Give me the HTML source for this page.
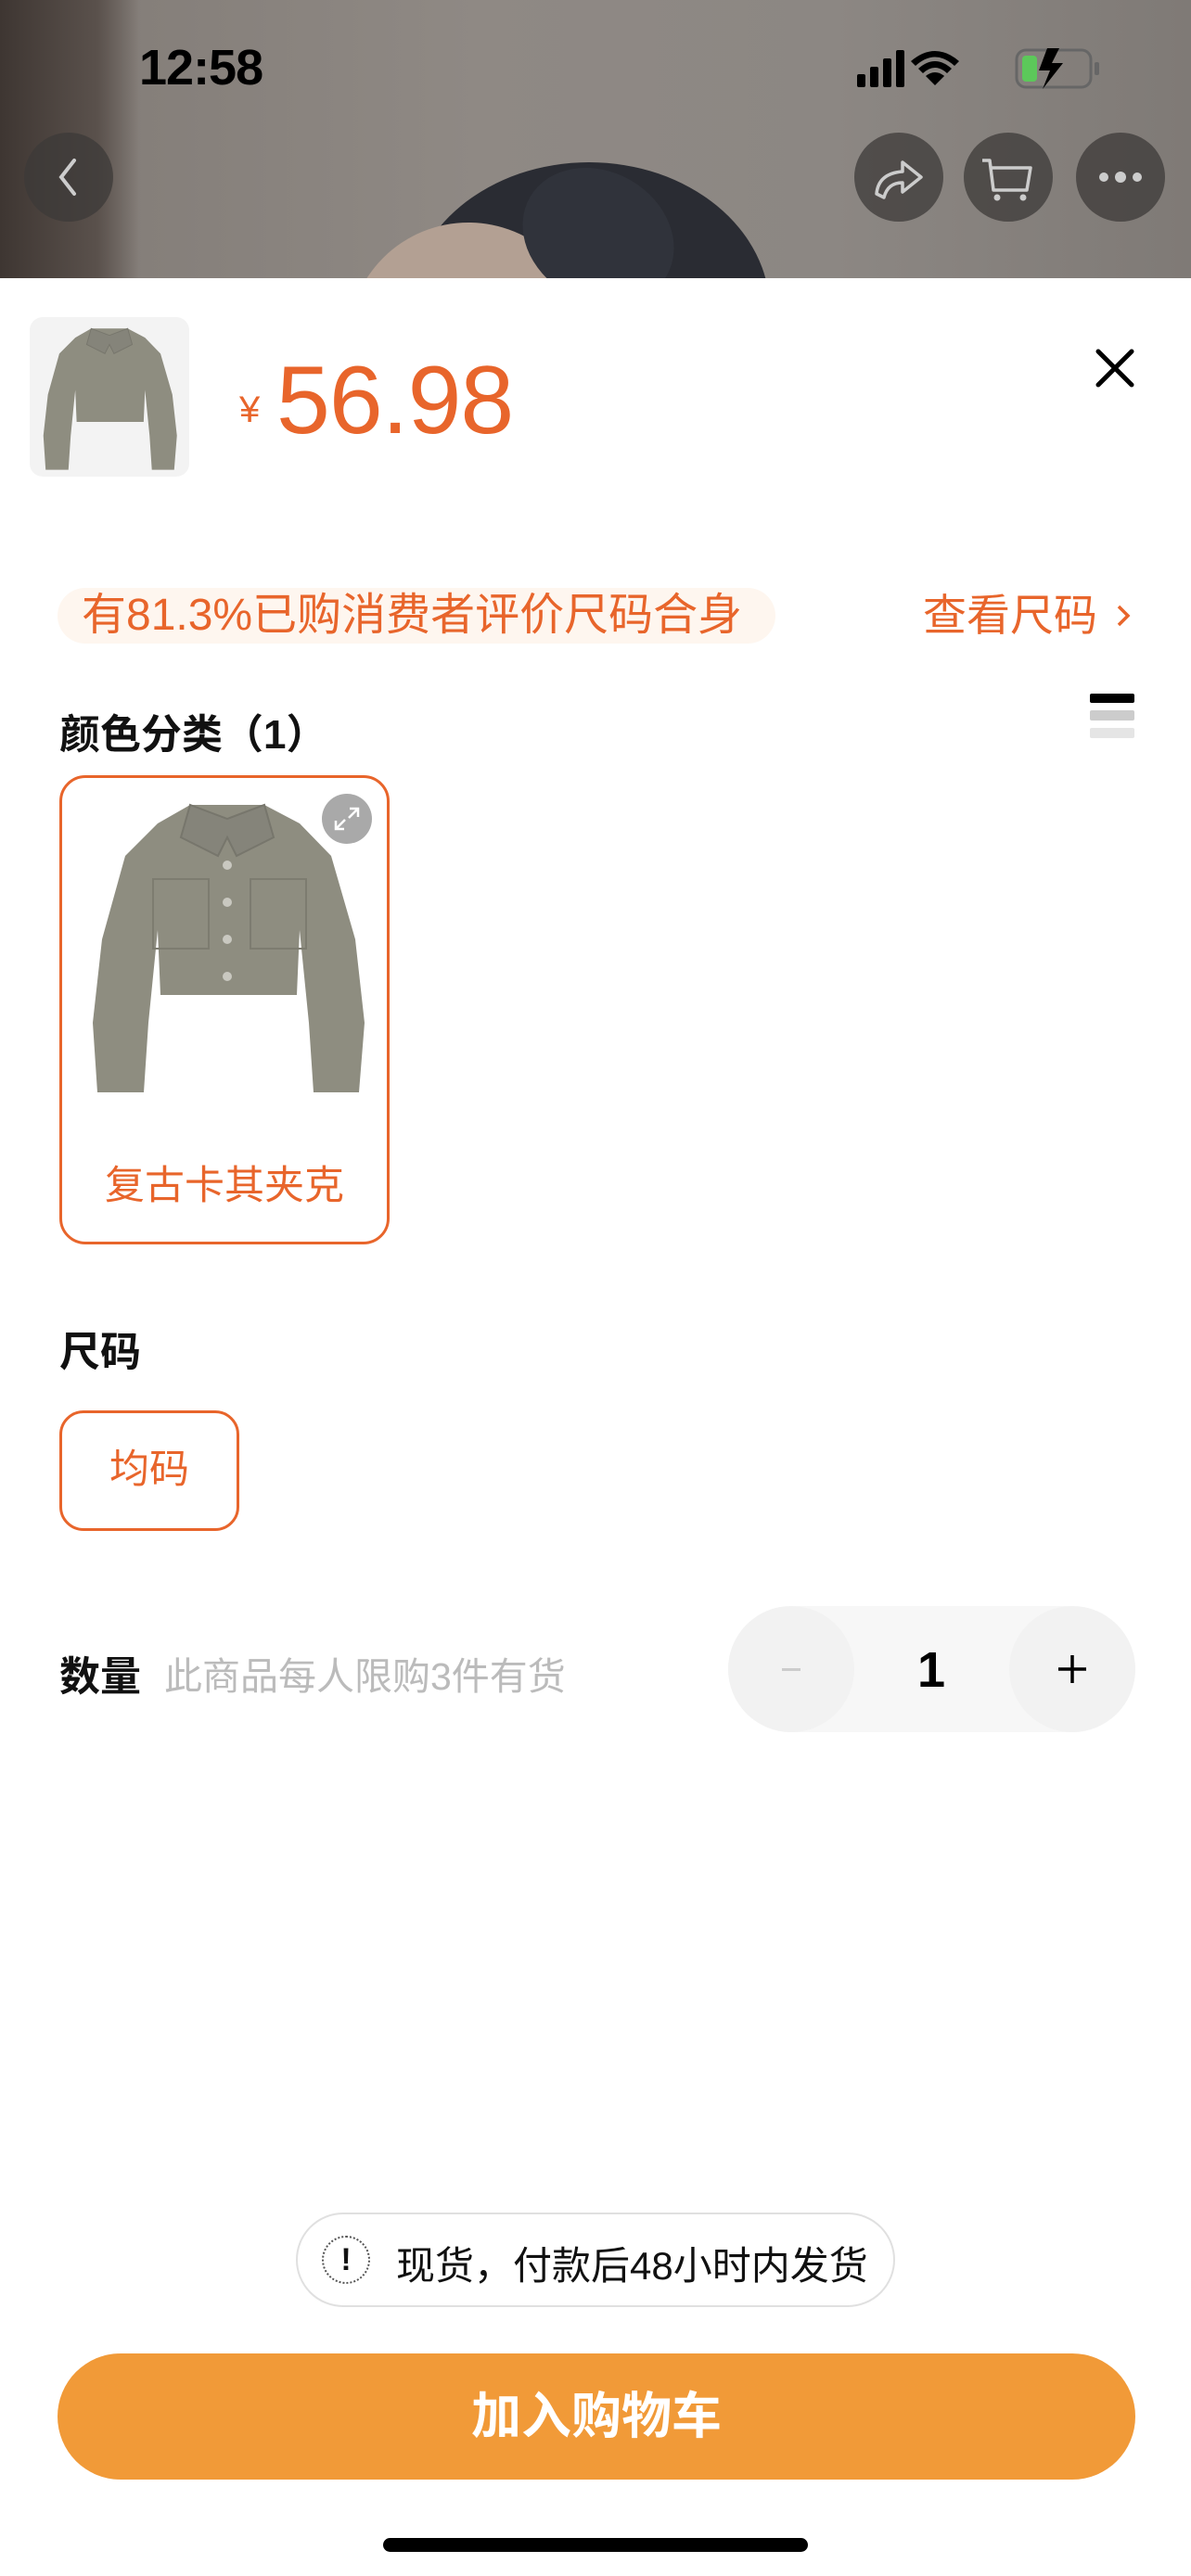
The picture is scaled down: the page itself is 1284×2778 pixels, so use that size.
<!DOCTYPE html>
<html><head><meta charset="utf-8"><style>
*{margin:0;padding:0;box-sizing:border-box}
body{width:1284px;height:2778px;position:relative;background:#fff;font-family:"Liberation Sans","Noto Sans CJK SC",sans-serif;overflow:hidden}
.a{position:absolute}
.or{color:#e8652b}
.circ{position:absolute;width:96px;height:96px;border-radius:50%;background:rgba(60,58,56,.75)}
</style></head><body>
<!-- header photo -->
<div class="a" style="left:0;top:0;width:1284px;height:300px;background:linear-gradient(90deg,#6f6762 0,#857f7a 12%,#8f8984 40%,#8c8783 70%,#7f7a76 100%);overflow:hidden">
  <div class="a" style="left:0;top:0;width:150px;height:300px;background:linear-gradient(90deg,#3e3632,#5a514c 70%,transparent)"></div>
  <div class="a" style="left:440px;top:175px;width:390px;height:320px;border-radius:50% 50% 20% 20%;background:#2a2c33"></div>
  <div class="a" style="left:375px;top:240px;width:260px;height:260px;border-radius:50%;background:#b3a093"></div>
  <div class="a" style="left:560px;top:185px;width:170px;height:140px;border-radius:50%;background:#30333b;transform:rotate(30deg)"></div>
</div>
<div class="a" style="left:150px;top:42px;font-size:54px;font-weight:bold;color:#000;letter-spacing:-1px">12:58</div>
<svg class="a" style="left:924px;top:50px" width="270" height="48" viewBox="0 0 270 48">
  <rect x="0" y="30" width="9" height="14" rx="2"/><rect x="14" y="22" width="9" height="22" rx="2"/><rect x="28" y="13" width="9" height="31" rx="2"/><rect x="42" y="4" width="9" height="40" rx="2"/>
  <path d="M84 42 L74 32 Q84 24 94 32 Z"/><path d="M66 24 Q84 8 102 24 L97 29 Q84 17 71 29 Z"/><path d="M58 16 Q84 -6 110 16 L105 21 Q84 2 63 21 Z"/>
  <rect x="172" y="4" width="80" height="40" rx="10" fill="none" stroke="#666" stroke-width="3"/><rect x="178" y="10" width="16" height="28" rx="4" fill="#5cc85a"/>
  <rect x="256" y="17" width="5" height="14" rx="2" fill="#666"/><path d="M205 2 L196 26 H208 L200 46 L222 18 H210 L218 2 Z"/>
</svg>
<div class="circ" style="left:26px;top:143px"></div>
<svg class="a" style="left:26px;top:143px" width="96" height="96"><path d="M54 30 L40 48 L54 66" fill="none" stroke="#ccc" stroke-width="4" stroke-linecap="round"/></svg>
<div class="circ" style="left:921px;top:143px"></div>
<svg class="a" style="left:921px;top:143px" width="96" height="96"><path d="M24 66 Q26 44 52 42 L52 32 L72 48 L52 64 L52 54 Q36 54 32 70 Z" fill="none" stroke="#ccc" stroke-width="3.5" stroke-linejoin="round"/></svg>
<div class="circ" style="left:1039px;top:143px"></div>
<svg class="a" style="left:1039px;top:143px" width="96" height="96"><path d="M20 30 H28 L32 62 H68 L72 38 H30" fill="none" stroke="#ccc" stroke-width="3.5" stroke-linejoin="round"/><circle cx="36" cy="70" r="3.5" fill="#ccc"/><circle cx="64" cy="70" r="3.5" fill="#ccc"/></svg>
<div class="circ" style="left:1160px;top:143px"></div>
<svg class="a" style="left:1160px;top:143px" width="96" height="96"><circle cx="30" cy="48" r="5" fill="#ccc"/><circle cx="48" cy="48" r="6" fill="#ccc"/><circle cx="66" cy="48" r="5" fill="#ccc"/></svg>

<!-- thumbnail -->
<div class="a" style="left:32px;top:342px;width:172px;height:172px;border-radius:14px;background:#f3f3f3;overflow:hidden">
<svg width="172" height="172" viewBox="-20 -10 340 350"><g fill="#8e8d80"><path d="M110,15 L75,35 L40,70 L15,160 L5,250 L10,325 L60,325 L65,250 L75,150 L78,220 L225,220 L228,150 L238,250 L243,325 L292,325 L298,250 L288,160 L262,70 L228,35 L190,15 Z"/></g><path d="M110,15 L150,30 L190,15 L200,50 L160,70 L150,50 L140,70 L100,50 Z" fill="#85847a" stroke="#77766c" stroke-width="2"/></svg>
</div>
<div class="a or" style="left:258px;top:420px;font-size:40px">¥</div>
<div class="a or" style="left:298px;top:373px;font-size:104px;letter-spacing:-1px">56.98</div>
<svg class="a" style="left:1180px;top:375px" width="44" height="44"><path d="M4 4 L40 40 M40 4 L4 40" stroke="#000" stroke-width="5" stroke-linecap="round"/></svg>

<!-- fit banner -->
<div class="a" style="left:62px;top:634px;width:774px;height:60px;border-radius:30px;background:#fef6ef"></div>
<div class="a or" style="left:88px;top:634px;font-size:48px;line-height:60px;white-space:nowrap">有81.3%已购消费者评价尺码合身</div>
<div class="a or" style="left:995px;top:634px;font-size:47px;line-height:60px;white-space:nowrap">查看尺码</div>
<svg class="a" style="left:1198px;top:648px" width="26" height="32"><path d="M8 6 L18 16 L8 26" fill="none" stroke="#e8652b" stroke-width="3.5"/></svg>

<div class="a" style="left:64px;top:756px;font-size:44px;font-weight:bold;color:#111;white-space:nowrap">颜色分类（1）</div>
<div class="a" style="left:1175px;top:748px;width:48px;height:10px;border-radius:2px;background:#000"></div>
<div class="a" style="left:1175px;top:766px;width:48px;height:11px;border-radius:2px;background:#ccc"></div>
<div class="a" style="left:1175px;top:785px;width:48px;height:11px;border-radius:2px;background:#e5e5e5"></div>

<!-- color card -->
<div class="a" style="left:64px;top:836px;width:356px;height:506px;border:3.5px solid #e8652b;border-radius:28px"></div>
<svg class="a" style="left:93px;top:853px" width="304" height="330" viewBox="0 0 300 330"><path d="M110,15 L75,35 L40,70 L15,160 L5,250 L10,325 L60,325 L65,250 L75,150 L78,220 L225,220 L228,150 L238,250 L243,325 L292,325 L298,250 L288,160 L262,70 L228,35 L190,15 Z" fill="#8e8d80"/><path d="M110,15 L150,30 L190,15 L200,50 L160,70 L150,50 L140,70 L100,50 Z" fill="#85847a" stroke="#77766c" stroke-width="2"/><path d="M70 95 H130 V170 H70 Z M175 95 H235 V170 H175 Z" fill="none" stroke="#7d7c70" stroke-width="2"/><g fill="#c9c8c0"><circle cx="150" cy="80" r="5"/><circle cx="150" cy="120" r="5"/><circle cx="150" cy="160" r="5"/><circle cx="150" cy="200" r="5"/></g></svg>
<div class="a" style="left:347px;top:856px;width:54px;height:54px;border-radius:50%;background:#a9a9a9"></div>
<svg class="a" style="left:347px;top:856px" width="54" height="54"><path d="M30 16 H39 V25 M39 16 L29 26 M24 38 H15 V29 M15 38 L25 28" fill="none" stroke="#fff" stroke-width="2.5"/></svg>
<div class="a or" style="left:64px;top:1244px;width:356px;text-align:center;font-size:43px">复古卡其夹克</div>

<div class="a" style="left:64px;top:1422px;font-size:44px;font-weight:bold;color:#111">尺码</div>
<div class="a or" style="left:64px;top:1521px;width:194px;height:130px;border:3.5px solid #e8652b;border-radius:26px;text-align:center;line-height:123px;font-size:43px">均码</div>

<div class="a" style="left:64px;top:1772px;font-size:44px;font-weight:bold;color:#111">数量</div>
<div class="a" style="left:177px;top:1774px;font-size:41px;color:#bbb;white-space:nowrap">此商品每人限购3件有货</div>
<div class="a" style="left:785px;top:1732px;width:439px;height:136px;border-radius:68px;background:#f7f7f7"></div>
<div class="a" style="left:785px;top:1732px;width:136px;height:136px;border-radius:50%;background:#f2f2f2"></div>
<div class="a" style="left:1088px;top:1732px;width:136px;height:136px;border-radius:50%;background:#f2f2f2"></div>
<div class="a" style="left:843px;top:1799px;width:20px;height:3px;background:#ccc"></div>
<div class="a" style="left:954px;top:1770px;width:100px;text-align:center;font-size:54px;font-weight:bold;color:#000">1</div>
<svg class="a" style="left:1138px;top:1782px" width="36" height="36"><path d="M18 3 V33 M3 18 H33" stroke="#000" stroke-width="3.5"/></svg>

<!-- notice -->
<div class="a" style="left:319px;top:2386px;width:646px;height:102px;border:2px solid #e0e0e0;border-radius:51px"></div>
<div class="a" style="left:347px;top:2411px;width:52px;height:52px;border:2px dotted #555;border-radius:50%;text-align:center;font-size:34px;line-height:48px;font-weight:bold;color:#111">!</div>
<div class="a" style="left:427px;top:2410px;font-size:42px;color:#111;white-space:nowrap">现货，付款后48小时内发货</div>

<div class="a" style="left:62px;top:2538px;width:1162px;height:136px;border-radius:68px;background:#f19a38;color:#fff;text-align:center;line-height:136px;font-size:54px;font-weight:bold">加入购物车</div>
<div class="a" style="left:413px;top:2737px;width:458px;height:15px;border-radius:8px;background:#000"></div>
</body></html>
